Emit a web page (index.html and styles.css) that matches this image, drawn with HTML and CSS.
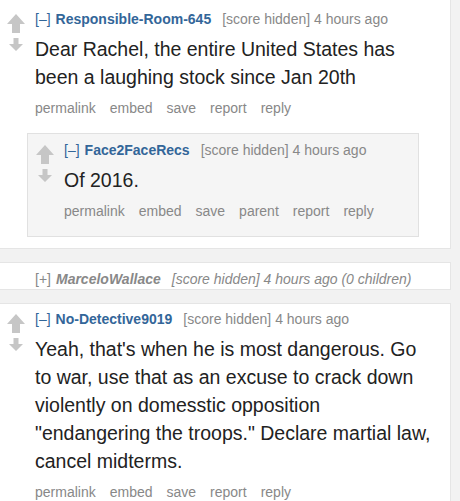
FILE: index.html
```html
<!DOCTYPE html>
<html lang="en">
<head>
<meta charset="utf-8">
<title>Comments</title>
<link rel="stylesheet" href="styles.css">
</head>
<body>
<div class="thing first">
  <div class="comment">
    <div class="midcol">
      <svg class="arrow up" width="18" height="19" viewBox="0 0 18 19"><path d="M9 0L18 10H13V19H5V10H0Z"/></svg>
      <svg class="arrow down" width="14" height="13" viewBox="0 0 14 13"><path d="M4.5 0H9.5V6H14L7 13L0 6H4.5Z"/></svg>
    </div>
    <div class="entry">
      <p class="tagline"><span class="expand">[–]</span><span class="author">Responsible-Room-645</span><span class="score">[score hidden]</span> <span class="time">4 hours ago</span></p>
      <div class="md"><p>Dear Rachel, the entire United States has been a laughing stock since Jan 20th</p></div>
      <ul class="buttons"><li>permalink</li><li>embed</li><li>save</li><li>report</li><li>reply</li></ul>
    </div>
  </div>
  <div class="child">
    <div class="comment">
      <div class="midcol">
        <svg class="arrow up" width="18" height="19" viewBox="0 0 18 19"><path d="M9 0L18 10H13V19H5V10H0Z"/></svg>
        <svg class="arrow down" width="14" height="13" viewBox="0 0 14 13"><path d="M4.5 0H9.5V6H14L7 13L0 6H4.5Z"/></svg>
      </div>
      <div class="entry">
        <p class="tagline"><span class="expand">[–]</span><span class="author">Face2FaceRecs</span><span class="score">[score hidden]</span> <span class="time">4 hours ago</span></p>
        <div class="md"><p>Of 2016.</p></div>
        <ul class="buttons"><li>permalink</li><li>embed</li><li>save</li><li>parent</li><li>report</li><li>reply</li></ul>
      </div>
    </div>
  </div>
</div>

<div class="thing collapsed">
  <div class="comment">
    <div class="midcol"></div>
    <div class="entry">
      <p class="tagline"><span class="expand">[+]</span><span class="author">MarceloWallace</span><span class="score">[score hidden]</span> <span class="time">4 hours ago</span> <span class="numchildren">(0 children)</span></p>
    </div>
  </div>
</div>

<div class="thing">
  <div class="comment">
    <div class="midcol">
      <svg class="arrow up" width="18" height="19" viewBox="0 0 18 19"><path d="M9 0L18 10H13V19H5V10H0Z"/></svg>
      <svg class="arrow down" width="14" height="13" viewBox="0 0 14 13"><path d="M4.5 0H9.5V6H14L7 13L0 6H4.5Z"/></svg>
    </div>
    <div class="entry">
      <p class="tagline"><span class="expand">[–]</span><span class="author">No-Detective9019</span><span class="score">[score hidden]</span> <span class="time">4 hours ago</span></p>
      <div class="md"><p>Yeah, that's when he is most dangerous. Go to war, use that as an excuse to crack down violently on domesstic opposition "endangering the troops." Declare martial law, cancel midterms.</p></div>
      <ul class="buttons"><li>permalink</li><li>embed</li><li>save</li><li>report</li><li>reply</li></ul>
    </div>
  </div>
</div>
</body>
</html>
```
FILE: styles.css
```css
* { box-sizing: border-box; }

body {
  margin: 0;
  background: #f2f2f2;
  font-family: "Liberation Sans", Arial, sans-serif;
}

.thing {
  background: #fff;
  border: 1px solid #e5e5e5;
  margin: 0 9px 13px -1px;
  padding: 5px 14px 20px 0;
}

.thing.first {
  border-top: 0;
  padding-top: 9px;
  padding-bottom: 11px;
}

.thing.collapsed {
  padding: 6px 14px 0 0;
}

.comment {
  display: flex;
}

.midcol {
  flex: none;
  width: 18px;
  margin: 5px 10px 0 7px;
  display: flex;
  flex-direction: column;
  align-items: center;
  gap: 5px;
}

.arrow {
  display: block;
  fill: #c6c6c6;
}

.entry {
  flex: 1;
  min-width: 0;
}

.tagline {
  margin: 0;
  font-size: 14px;
  line-height: 20px;
  color: #888;
  white-space: nowrap;
}

.expand {
  color: #369;
  margin-right: 5px;
}

.author {
  color: #369;
  font-weight: bold;
  margin-right: 11px;
}

.collapsed .expand {
  color: #888;
}

.collapsed .author {
  color: #888;
  font-style: italic;
}

.collapsed .score,
.collapsed .time,
.collapsed .numchildren {
  font-style: italic;
}

.md {
  margin-top: 5.5px;
  font-size: 19.5px;
  line-height: 28px;
  color: #222;
}

.md p {
  margin: 0;
}

.buttons {
  list-style: none;
  margin: 7.5px 0 0;
  padding: 0;
  display: flex;
  gap: 14px;
  font-size: 14px;
  line-height: 20px;
  color: #888;
}

.child {
  margin: 15px 17px 0 27px;
  background: #f5f5f5;
  border: 1px solid #e1e1e1;
  padding: 6px 14px 15px 1px;
}
```
